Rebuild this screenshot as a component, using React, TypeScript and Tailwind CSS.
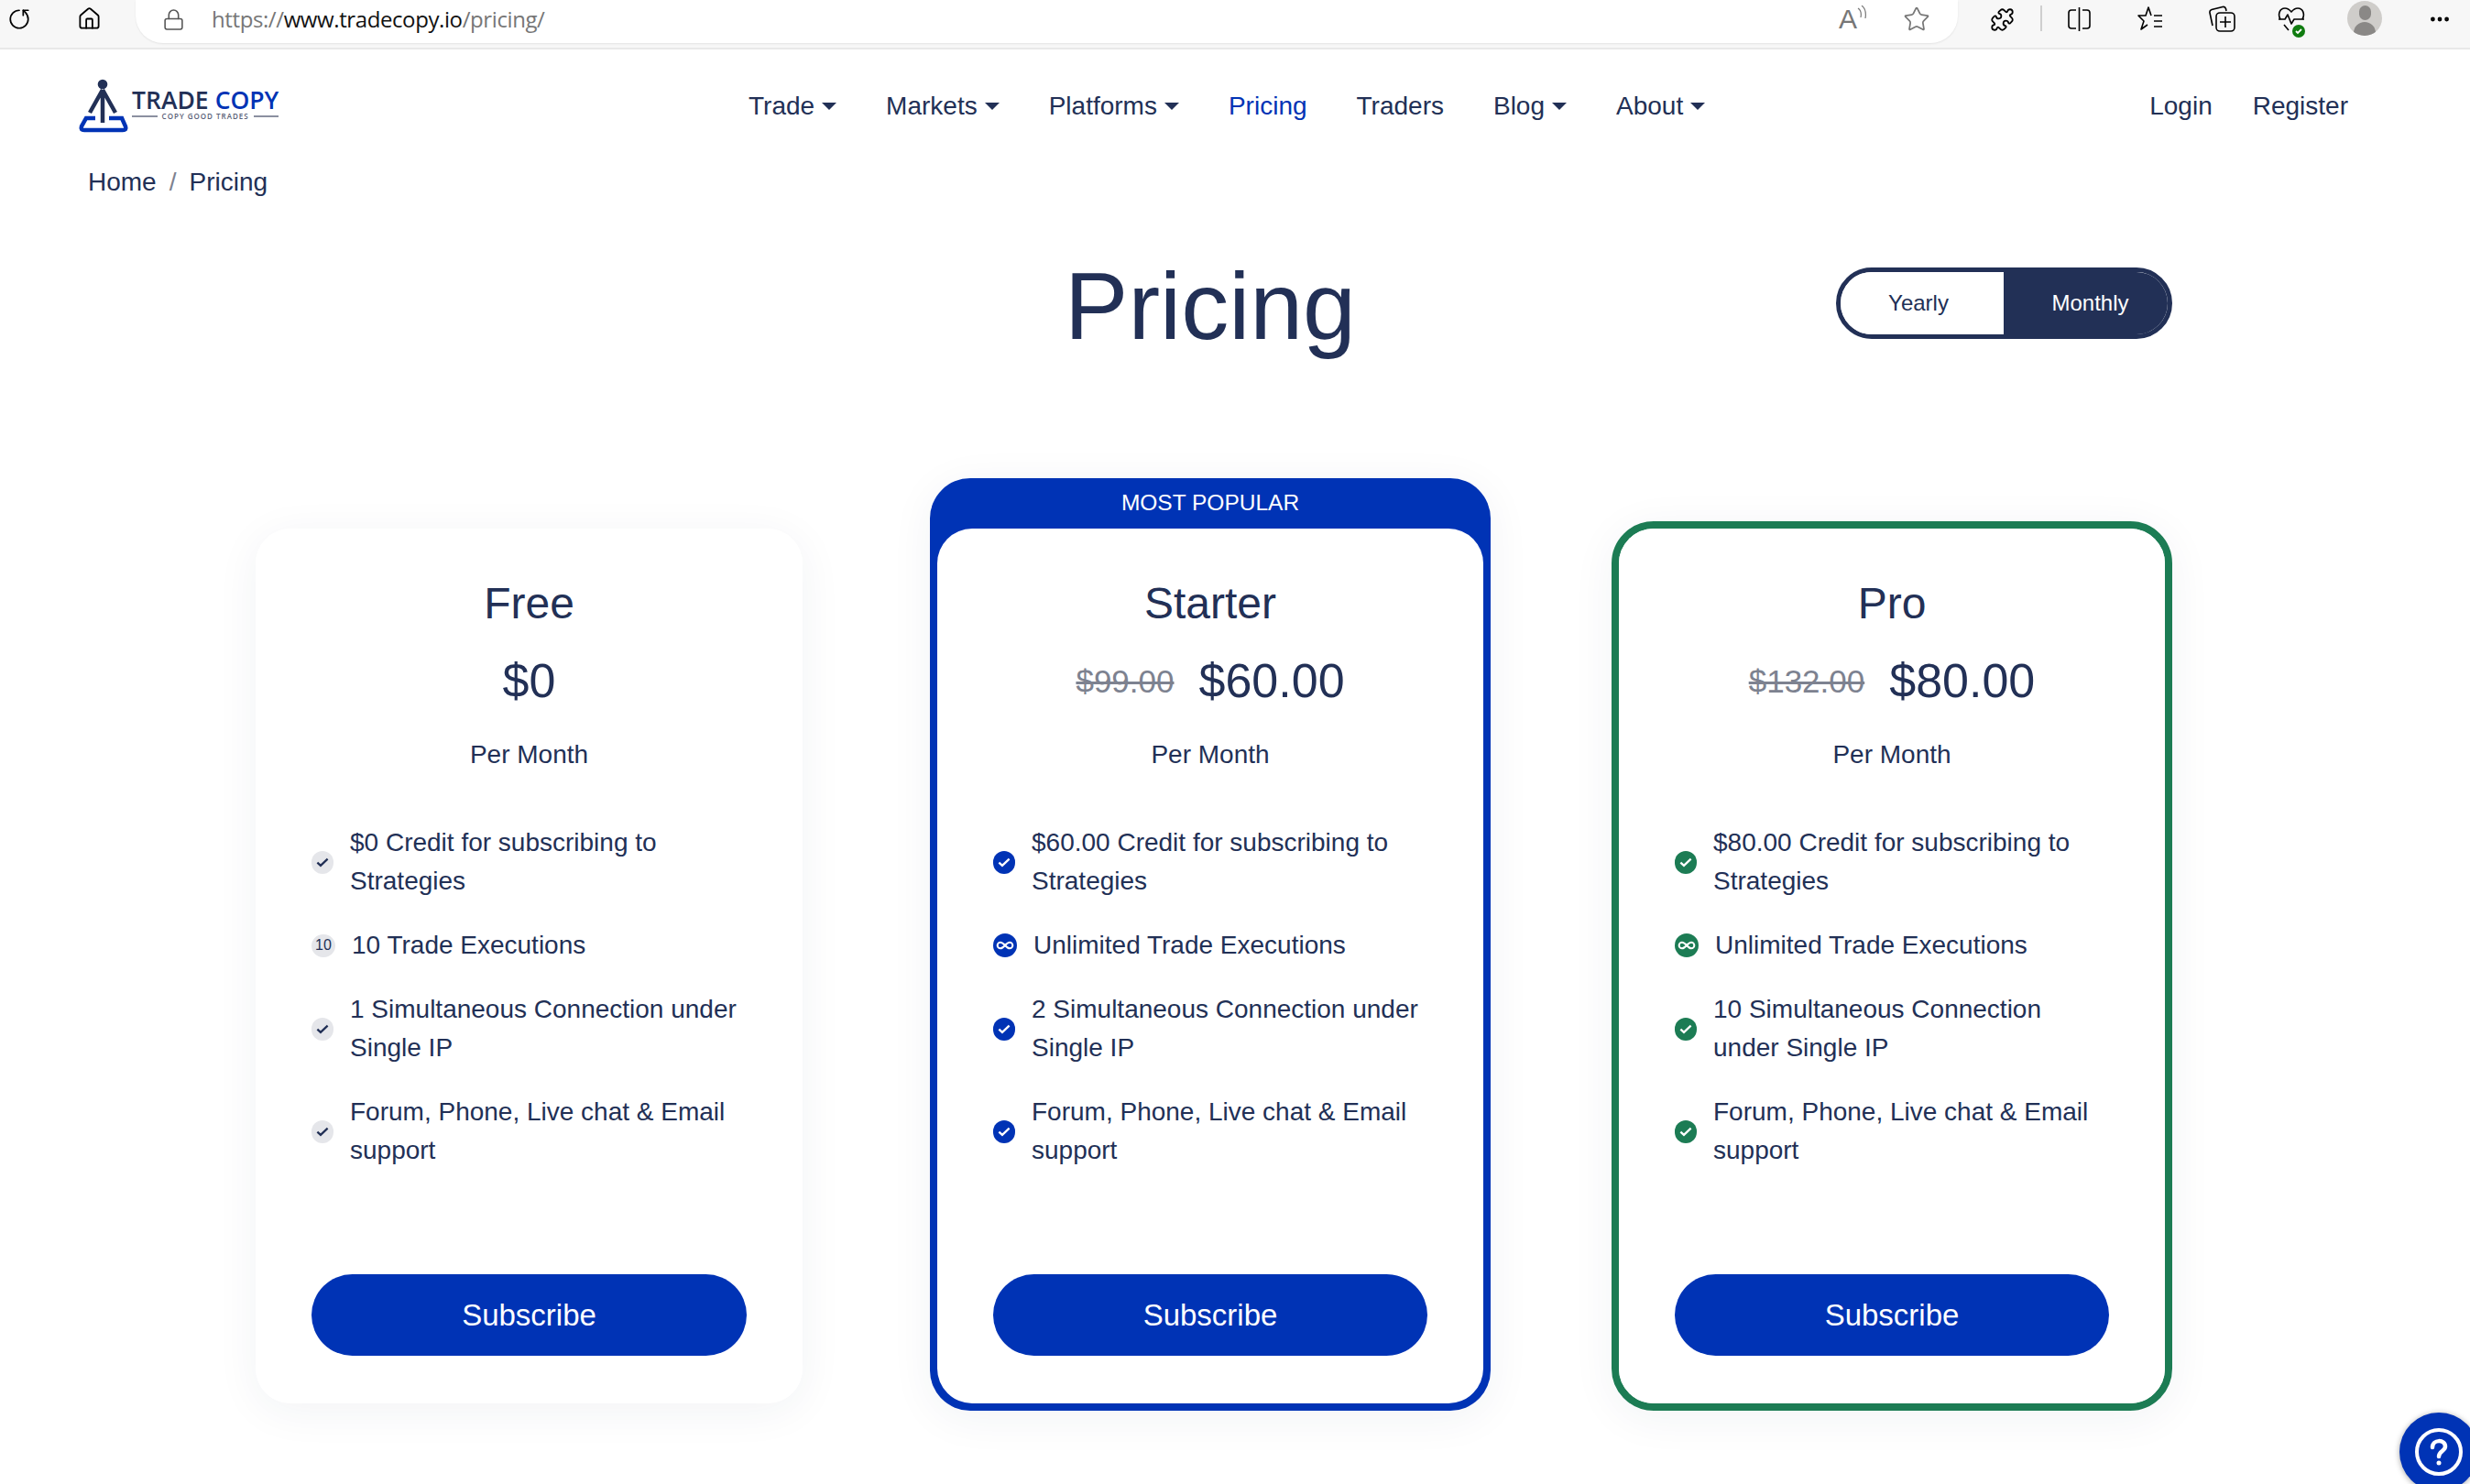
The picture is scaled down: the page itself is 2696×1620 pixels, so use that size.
import { Infinity as InfinityIcon, Home, Lock, MoreHorizontal, Puzzle, RotateCw, Star } from "lucide-react";

type Feature = { text: string; icon: "check" | "ten" | "infinity" };

type Plan = {
    name: string;
    price: string;
    oldPrice?: string;
    variant: "plain" | "popular" | "pro";
    features: Feature[];
};

const PLANS: Plan[] = [
    {
        name: "Free",
        price: "$0",
        variant: "plain",
        features: [
            { text: "$0 Credit for subscribing to Strategies", icon: "check" },
            { text: "10 Trade Executions", icon: "ten" },
            { text: "1 Simultaneous Connection under Single IP", icon: "check" },
            { text: "Forum, Phone, Live chat & Email support", icon: "check" },
        ],
    },
    {
        name: "Starter",
        price: "$60.00",
        oldPrice: "$99.00",
        variant: "popular",
        features: [
            { text: "$60.00 Credit for subscribing to Strategies", icon: "check" },
            { text: "Unlimited Trade Executions", icon: "infinity" },
            { text: "2 Simultaneous Connection under Single IP", icon: "check" },
            { text: "Forum, Phone, Live chat & Email support", icon: "check" },
        ],
    },
    {
        name: "Pro",
        price: "$80.00",
        oldPrice: "$132.00",
        variant: "pro",
        features: [
            { text: "$80.00 Credit for subscribing to Strategies", icon: "check" },
            { text: "Unlimited Trade Executions", icon: "infinity" },
            { text: "10 Simultaneous Connection under Single IP", icon: "check" },
            { text: "Forum, Phone, Live chat & Email support", icon: "check" },
        ],
    },
];

const NAV = [
    { label: "Trade", caret: true },
    { label: "Markets", caret: true },
    { label: "Platforms", caret: true },
    { label: "Pricing", active: true },
    { label: "Traders" },
    { label: "Blog", caret: true },
    { label: "About", caret: true },
];

function BrowserBar() {
    return (
        <div className="flex h-[54px] items-start border-b-2 border-[#e8e8e8] bg-[#f7f7f7] text-black">
            <RotateCw className="mt-[8px] ml-[8px] h-[26px] w-[26px] -scale-x-100 rotate-90" strokeWidth={1.6} />
            <Home className="mt-[7px] ml-[50px] h-[27px] w-[27px]" strokeWidth={1.6} />
            <div className="ml-[37px] flex h-[47px] w-[1989px] items-center rounded-b-[30px] bg-white shadow-[0_1px_2px_rgba(0,0,0,0.08)]">
                <Lock className="mb-[5px] ml-[29px] h-[29px] w-[25px] text-[#555]" strokeWidth={1.5} />
                <span className="mb-[5px] ml-[29px] font-['Open_Sans',sans-serif] text-[24px] tracking-[-0.4px] text-[#777]">
                    https://<span className="text-[#111]">www.tradecopy.io</span>/pricing/
                </span>
                <span className="relative mb-[5px] ml-auto flex items-center text-[#777]">
                    <span className="text-[30px] leading-none font-light">A</span>
                    <svg className="mb-[12px] h-[18px] w-[10px]" viewBox="0 0 10 18" fill="none" stroke="currentColor" strokeWidth="1.2">
                        <path d="M1 3c3 2 4 5 3 10M5 0c4 3 5 8 4 14" />
                    </svg>
                </span>
                <Star className="mr-[30px] mb-[5px] ml-[40px] h-[30px] w-[30px] text-[#777]" strokeWidth={1.4} />
            </div>
            <Puzzle className="mt-[8px] ml-[35px] h-[27px] w-[27px]" strokeWidth={1.6} />
            <div className="mt-[6px] ml-[28px] h-[28px] w-[2px] bg-[#cfcfcf]" />
            <svg className="mt-[7px] ml-[27px] h-[28px] w-[27px]" viewBox="0 0 27 28" fill="none" stroke="currentColor" strokeWidth="1.6">
                <path d="M10 4H5a3 3 0 0 0-3 3v14a3 3 0 0 0 3 3h5M17 4h5a3 3 0 0 1 3 3v14a3 3 0 0 1-3 3h-5M13.5 1v26" />
            </svg>
            <svg className="mt-[6px] ml-[50px] h-[28px] w-[28px]" viewBox="0 0 28 28" fill="none" stroke="currentColor" strokeWidth="1.6" strokeLinejoin="round">
                <path d="M15 11 12 2l-3 9H1l6 6-3 9 7-5M18 11h9M18 17h9M18 23h9" />
            </svg>
            <svg className="mt-[6px] ml-[49px] h-[29px] w-[30px]" viewBox="0 0 30 29" fill="none" stroke="currentColor" strokeWidth="1.6">
                <path d="M5 22 2 8c-.4-2 .5-3 2-3.500L16 1.500c1.500-.4 3 .4 3.500 2L20 6" />
                <rect x="9" y="8" width="20" height="20" rx="4" />
                <path d="M19 12v12M13 18h12" />
            </svg>
            <div className="relative mt-[6px] ml-[46px] h-[30px] w-[30px]">
                <svg className="h-[30px] w-[30px]" viewBox="0 0 30 30" fill="none" stroke="currentColor" strokeWidth="1.6" strokeLinejoin="round">
                    <path d="M3 15C0 10 2 3 8 3c3 0 5 1.500 7 4 2-2.500 4-4 7-4 6 0 8 7 5 12" />
                    <path d="M1 15h7l3-5 4 10 3-5h11M7 21l5 6" />
                </svg>
                <span className="absolute right-[0px] bottom-[-5px] flex h-[14px] w-[14px] items-center justify-center rounded-full bg-[#107c10]">
                    <svg className="h-[10px] w-[10px]" viewBox="0 0 10 10" fill="none" stroke="white" strokeWidth="1.8">
                        <path d="m2 5 2 2 4-4" />
                    </svg>
                </span>
            </div>
            <div className="relative mt-[1px] ml-[46px] h-[38px] w-[38px] overflow-hidden rounded-full bg-[#cfcdca]">
                <div className="mx-auto mt-[5px] h-[16px] w-[13px] rounded-full bg-[#8a8886]" />
                <div className="mx-auto mt-[2px] h-[22px] w-[24px] rounded-t-full bg-[#8a8886]" />
            </div>
            <MoreHorizontal className="mt-[8px] ml-[50px] h-[26px] w-[26px]" strokeWidth={2.4} />
        </div>
    );
}

function Logo() {
    return (
        <div className="flex w-[219px] items-center">
            <svg className="mb-[6px] h-[68px] w-[58px] shrink-0" viewBox="84 78 58 68" fill="none" strokeWidth="4.5">
                <circle cx="112" cy="91" r="5.300" fill="#223056" />
                <path d="M112 97 98 122M112 97l14 25M112 97v36" stroke="#223056" />
                <path d="M104 128H94l-5 9c-1 3 0 4 3 4h42c3 0 4-1 3-4l-4-9h-14" stroke="#0033b5" />
            </svg>
            <div className="mb-[4px] ml-[2px] flex flex-col font-['Open_Sans',sans-serif]">
                <div className="flex gap-[7px] text-[26.5px] leading-[26px] font-semibold whitespace-nowrap">
                    <span className="text-[#223056]">TRADE</span>
                    <span className="text-[#0033b5]">COPY</span>
                </div>
                <div className="mt-[1px] flex items-center gap-[5px]">
                    <div className="h-[2px] flex-1 bg-[#8b90a0]" />
                    <span className="text-[8px] leading-[8px] font-semibold tracking-[1px] whitespace-nowrap text-[#5a6178]">COPY GOOD TRADES</span>
                    <div className="h-[2px] flex-1 bg-[#8b90a0]" />
                </div>
            </div>
        </div>
    );
}

function TopNav() {
    return (
        <div className="flex h-[123px] items-center pr-[133px] pl-[84px] text-[28px] text-[#223056]">
            <Logo />
            <div className="ml-[514px] flex gap-[54px]">
                {NAV.map((item) => (
                    <div key={item.label} className={`flex items-center gap-[8px] ${item.active ? "text-[#0033b5]" : ""}`}>
                        {item.label}
                        {item.caret && (
                            <span className="h-0 w-0 border-x-[8.5px] border-t-[8px] border-x-transparent border-t-[#223056]" />
                        )}
                    </div>
                ))}
            </div>
            <div className="ml-auto flex gap-[44px]">
                <span>Login</span>
                <span>Register</span>
            </div>
        </div>
    );
}

function FeatureIcon({ icon, variant }: { icon: Feature["icon"]; variant: Plan["variant"] }) {
    const tone = variant === "popular" ? "bg-[#0033b5]" : variant === "pro" ? "bg-[#1c7c54]" : "bg-[#e5e6ea]";
    if (icon === "ten") {
        return (
            <span className={`flex h-[25px] w-[26px] shrink-0 items-center justify-center rounded-full text-[16px] text-[#223056] ${tone}`}>
                10
            </span>
        );
    }
    if (icon === "infinity") {
        return (
            <span className={`flex h-[26px] w-[26px] shrink-0 items-center justify-center rounded-full ${tone}`}>
                <InfinityIcon className="h-[20px] w-[20px] text-white" strokeWidth={2.4} />
            </span>
        );
    }
    return (
        <span className={`flex h-[25px] w-[24px] shrink-0 items-center justify-center rounded-full ${tone}`}>
            <svg
                className="h-[18px] w-[18px]"
                viewBox="0 0 16 16"
                fill="none"
                stroke={variant === "plain" ? "#223056" : "#ffffff"}
                strokeWidth="2"
            >
                <path d="m3 8.500 3.200 3L13 5" />
            </svg>
        </span>
    );
}

function PlanBody({ plan }: { plan: Plan }) {
    return (
        <div className="flex h-full flex-col rounded-[38px] bg-white px-[61px] pt-[53px] pb-[52px] text-[#223056]">
            <div className="text-center text-[48px] leading-[58px]">{plan.name}</div>
            <div className="mt-[24px] flex h-[62px] items-center justify-center gap-[27px] leading-[62px]">
                {plan.oldPrice && <s className="mt-[2px] text-[35px] text-[#7d8290]">{plan.oldPrice}</s>}
                <span className="text-[52px]">{plan.price}</span>
            </div>
            <div className="mt-[29px] text-center text-[28px] leading-[42px]">Per Month</div>
            <div className="mt-[54px] flex flex-col gap-[28px]">
                {plan.features.map((f) => (
                    <div key={f.text} className="flex items-center gap-[18px]">
                        <FeatureIcon icon={f.icon} variant={plan.variant} />
                        <span className="text-[28px] leading-[42px]">{f.text}</span>
                    </div>
                ))}
            </div>
            <button
                type="button"
                className="mt-auto h-[89px] w-full rounded-full bg-[#0033b5] text-[33px] text-white"
            >
                Subscribe
            </button>
        </div>
    );
}

function PlanCard({ plan }: { plan: Plan }) {
    if (plan.variant === "popular") {
        return (
            <div className="ml-[139px] flex h-[1018px] w-[612px] flex-col rounded-[44px] bg-[#0033b5] px-[8px] pb-[8px] shadow-[0_8px_48px_rgba(34,48,86,0.06)]">
                <div className="flex h-[55px] shrink-0 items-center justify-center text-[24.5px] text-white">MOST POPULAR</div>
                <div className="min-h-0 flex-1">
                    <PlanBody plan={plan} />
                </div>
            </div>
        );
    }
    if (plan.variant === "pro") {
        return (
            <div className="ml-[132px] h-[971px] w-[612px] rounded-[46px] border-[8px] border-[#1c7c54] bg-white shadow-[0_8px_48px_rgba(34,48,86,0.06)]">
                <PlanBody plan={plan} />
            </div>
        );
    }
    return (
        <div className="mb-[8px] h-[955px] w-[597px] rounded-[38px] bg-white shadow-[0_8px_48px_rgba(34,48,86,0.06)]">
            <PlanBody plan={plan} />
        </div>
    );
}

export default function App() {
    return (
        <div className="relative h-[1620px] w-[2696px] overflow-hidden bg-white font-['Liberation_Sans',Arial,sans-serif]">
            <BrowserBar />
            <TopNav />
            <div className="flex h-[44px] items-center gap-[14px] pl-[96px] text-[28px] text-[#223056]">
                <span>Home</span>
                <span className="text-[#7d8290]">/</span>
                <span>Pricing</span>
            </div>
            <div className="mt-[71px] ml-[279px] flex h-[78px] items-center text-[#223056]">
                <div className="ml-[736px] w-[612px] pt-[6px] text-center text-[104px] leading-none">Pricing</div>
                <div className="ml-[132px] flex w-[612px] justify-end">
                    <div className="flex h-[78px] w-[367px] overflow-hidden rounded-full border-[5px] border-[#223056] text-[24px]">
                        <div className="flex w-[178px] items-center justify-center bg-white pr-[8px]">Yearly</div>
                        <div className="flex flex-1 items-center justify-center bg-[#223056] pl-[10px] text-white">Monthly</div>
                    </div>
                </div>
            </div>
            <div className="mt-[152px] ml-[279px] flex h-[1018px] items-end">
                {PLANS.map((plan) => (
                    <PlanCard key={plan.name} plan={plan} />
                ))}
            </div>
            <div className="absolute top-[1542px] left-[2619px] flex h-[86px] w-[86px] items-center justify-center rounded-full bg-[#0033b5] shadow-[0_1px_6px_rgba(0,0,0,0.35)]">
                <svg className="h-[56px] w-[56px]" viewBox="0 0 56 56" fill="none" stroke="white" strokeWidth="4" strokeLinecap="round">
                    <circle cx="28" cy="28" r="24" />
                    <path d="M21 23c0-9 14-9 14-1 0 5-7 5-7 11" strokeWidth="4.500" />
                    <circle cx="28" cy="40" r="2.500" fill="white" stroke="none" />
                </svg>
            </div>
        </div>
    );
}
